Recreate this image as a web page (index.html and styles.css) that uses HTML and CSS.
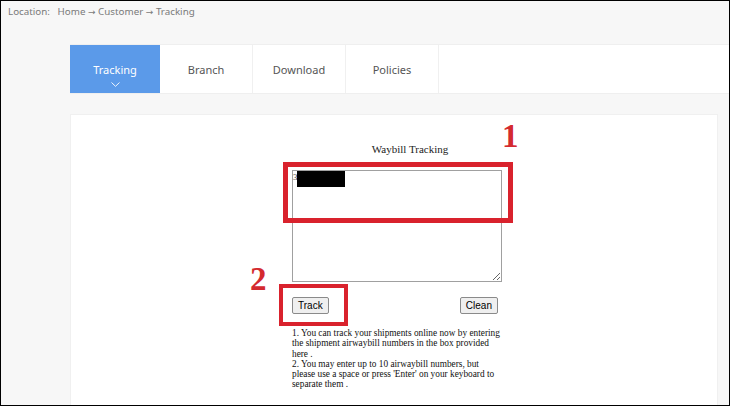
FILE: index.html
```html
<!DOCTYPE html>
<html lang="en">
<head>
    <meta charset="UTF-8">
    <title>Waybill Tracking</title>
    <link rel="stylesheet" href="styles.css">
</head>
<body>
    <div class="page">
        <div class="location">Location:&nbsp;&nbsp; Home <span class="arrow">→</span> Customer <span class="arrow">→</span> Tracking</div>

        <div class="nav">
            <a class="tab active" href="#">Tracking
                <svg class="chevron" width="9" height="5" viewBox="0 0 9 5"><polyline points="0.5,0.5 4.5,4.3 8.5,0.5" fill="none" stroke="#fff" stroke-width="0.9"/></svg>
            </a>
            <a class="tab" href="#">Branch</a>
            <a class="tab" href="#">Download</a>
            <a class="tab" href="#">Policies</a>
        </div>

        <div class="card">
            <div class="track-form">
                <div class="form-title">Waybill Tracking</div>
                <textarea class="waybills"></textarea>
                <div class="buttons">
                    <button type="button">Track</button>
                    <button type="button">Clean</button>
                </div>
                <p class="notes">
                    1. You can track your shipments online now by entering the shipment airwaybill numbers in the box provided here .<br>
                    2. You may enter up to 10 airwaybill numbers, but please use a space or press 'Enter' on your keyboard to separate them .
                </p>
            </div>
        </div>

        <!-- screenshot markup -->
        <div class="redact"><span class="redact-char">3</span><span class="redact-box"></span></div>
        <div class="mark mark-1"></div>
        <div class="mark mark-2"></div>
        <span class="num num-1">1</span>
        <span class="num num-2">2</span>
    </div>
</body>
</html>
```

FILE: styles.css
```css
body {
    margin: 0;
}
.page {
    position: relative;
    width: 730px;
    height: 406px;
    box-sizing: border-box;
    border: 1px solid #000;
    background: #f7f7f7;
    overflow: hidden;
    font-family: "Noto Sans", "Open Sans", sans-serif;
}
.location {
    padding: 4px 0 0 7px;
    height: 38px;
    box-sizing: border-box;
    font-size: 9.8px;
    line-height: 14px;
    color: #7a7a7a;
}
.arrow {
    font-family: "DejaVu Sans", sans-serif;
    font-size: 9px;
}
.nav {
    display: flex;
    margin: 5px 0 0 69px;
    height: 48px;
    background: #fff;
    border-top: 1px solid #efefef;
    border-bottom: 1px solid #efefef;
}
.tab {
    position: relative;
    display: flex;
    align-items: center;
    justify-content: center;
    width: 92px;
    border-right: 1px solid #f0f0f0;
    font-size: 11px;
    color: #555;
    text-decoration: none;
}
.tab:first-child {
    width: 90px;
    border-right: none;
}
.tab.active {
    background: #5b9ae9;
    color: #fff;
}
.chevron {
    position: absolute;
    left: 41px;
    top: 37px;
}
.card {
    margin: 20px 0 0 69px;
    width: 648px;
    height: 300px;
    box-sizing: border-box;
    background: #fff;
    border: 1px solid #f0f0f0;
    padding: 28px 0 0 221px;
}
.track-form {
    width: 210px;
}
.form-title {
    padding-left: 26px;
    text-align: center;
    font-family: "Liberation Serif", serif;
    font-size: 11px;
    line-height: 13px;
    color: #222;
}
.waybills {
    display: block;
    margin-top: 14px;
    width: 210px;
    height: 112px;
    box-sizing: border-box;
    border: 1px solid #a0a0a0;
    padding: 2px;
    resize: vertical;
}
.buttons {
    display: flex;
    justify-content: space-between;
    margin-top: 15px;
    padding-right: 4px;
}
.buttons button {
    height: 17px;
    padding: 0 5px;
    font-family: "Liberation Sans", Arial, sans-serif;
    font-size: 10px;
    color: #000;
    background: #efefef;
    border: 1px solid #8a8a8a;
    border-radius: 2px;
}
.notes {
    width: 208px;
    margin: 14px 0 0;
    font-family: "Liberation Serif", serif;
    font-size: 9.3px;
    line-height: 10.3px;
    color: #111;
}
.redact {
    position: absolute;
    left: 292px;
    top: 170px;
    display: flex;
    align-items: flex-start;
}
.redact-char {
    font-family: "Liberation Serif", serif;
    font-size: 9px;
    line-height: 12px;
    color: #444;
    width: 4px;
}
.redact-box {
    width: 48px;
    height: 16px;
    background: #000;
}
.mark {
    position: absolute;
    border: 5px solid #d9222d;
    box-sizing: border-box;
}
.mark-1 {
    left: 282px;
    top: 161px;
    width: 230px;
    height: 61px;
}
.mark-2 {
    left: 278px;
    top: 283px;
    width: 69px;
    height: 42px;
    border-width: 4px;
}
.num {
    position: absolute;
    font-family: "Liberation Serif", serif;
    font-weight: bold;
    font-size: 33px;
    line-height: 33px;
    color: #d42a2f;
}
.num-1 {
    left: 501px;
    top: 119px;
}
.num-2 {
    left: 249px;
    top: 262px;
}
```
